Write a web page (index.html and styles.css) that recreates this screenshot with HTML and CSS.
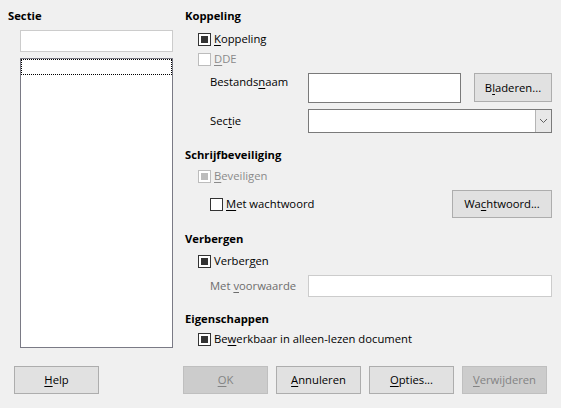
FILE: index.html
```html
<!DOCTYPE html>
<html>
<head>
<meta charset="utf-8">
<link rel="stylesheet" href="styles.css">
</head>
<body>
<div class="dialog">
  <div class="main">
    <div class="left">
      <div class="heading">Sectie</div>
      <div class="field field-light name-input"></div>
      <div class="listbox"><div class="focus-row"></div></div>
    </div>
    <div class="right">
      <div class="heading">Koppeling</div>
      <div class="chk-row r-link"><span class="cb checked"></span><span><u>K</u>oppeling</span></div>
      <div class="chk-row disabled"><span class="cb"></span><span><u>D</u>DE</span></div>
      <div class="row r-file">
        <span class="lbl lbl-top">Bestands<u>n</u>aam</span>
        <div class="field file-input"></div>
        <button class="btn browse">B<u>l</u>aderen...</button>
      </div>
      <div class="row r-sect">
        <span class="lbl">Sec<u>t</u>ie</span>
        <div class="combo"><span class="drop"><svg width="9" height="6" viewBox="0 0 9 6"><path d="M1 1 L4.5 4.5 L8 1" fill="none" stroke="#606060" stroke-width="1"/></svg></span></div>
      </div>
      <div class="heading h-prot">Schrijfbeveiliging</div>
      <div class="chk-row disabled r-prot"><span class="cb checked"></span><span><u>B</u>eveiligen</span></div>
      <div class="row r-pass">
        <span class="cb"></span><span class="pass-lbl"><u>M</u>et wachtwoord</span>
        <button class="btn pass-btn">Wa<u>c</u>htwoord...</button>
      </div>
      <div class="heading h-hide">Verbergen</div>
      <div class="chk-row r-hide"><span class="cb checked"></span><span>Verber<u>g</u>en</span></div>
      <div class="row r-cond">
        <span class="lbl disabled-text">Met <u>v</u>oorwaarde</span>
        <div class="field field-light cond-input"></div>
      </div>
      <div class="heading h-prop">Eigenschappen</div>
      <div class="chk-row r-edit"><span class="cb checked"></span><span>Be<u>w</u>erkbaar in alleen-lezen document</span></div>
    </div>
  </div>
  <div class="footer">
    <button class="btn"><u>H</u>elp</button>
    <div class="actions">
      <button class="btn disabled"><u>O</u>K</button>
      <button class="btn"><u>A</u>nnuleren</button>
      <button class="btn"><u>O</u>pties...</button>
      <button class="btn disabled"><u>V</u>erwijderen</button>
    </div>
  </div>
</div>
</body>
</html>
```
FILE: styles.css
```css
* { box-sizing: border-box; }
html, body { margin: 0; padding: 0; }
body {
  background: #f0f0f0;
  font-family: "Open Sans", "Noto Sans", sans-serif;
  font-size: 11.25px;
  line-height: 16px;
  color: #000;
}
u { text-underline-offset: 2px; }
.btn {
  width: 85px; height: 28px; padding: 0; margin: 0;
  background: #e1e1e1; border: 1px solid #adadad;
  font: inherit; color: #000;
  display: flex; align-items: center; justify-content: center; white-space: nowrap;
}
.btn.disabled { background: #cccccc; border-color: #bfbfbf; color: #838383; }

.dialog { width: 561px; height: 408px; display: flex; flex-direction: column; }
.main { height: 366px; padding-top: 8px; display: grid; grid-template-columns: 185px 1fr; }
.left { padding-left: 8px; display: flex; flex-direction: column; }
.heading { font-weight: 700; height: 16px; white-space: nowrap; }
.field { background: #fff; border: 1px solid #7a7a7a; }
.field-light { border-color: #cccccc; }
.name-input { margin-top: 6px; margin-left: 12px; width: 153px; height: 22px; }
.listbox { margin-top: 6px; margin-left: 12px; width: 153px; height: 290px; background: #fff; border: 1px solid #7a7a85; }
.focus-row { height: 16px; border: 1px dotted #000; }

.right { display: flex; flex-direction: column; padding-right: 9px; }
.row { display: flex; align-items: center; padding-left: 25px; }
.chk-row { display: flex; align-items: center; height: 20px; padding-left: 13px; gap: 3px; white-space: nowrap; }
.cb { width: 13px; height: 13px; border: 1px solid #333; background: #fff; display: flex; align-items: center; justify-content: center; flex: none; }
.cb.checked::after { content: ""; width: 7px; height: 7px; background: #333; }
.disabled { color: #8a8a8a; }
.disabled .cb { border-color: #bcbcbc; }
.disabled .cb.checked::after { background: #bcbcbc; }
.disabled-text { color: #6d6d6d; }

.r-link { margin-top: 5px; }
.lbl { width: 98px; flex: none; white-space: nowrap; }
.r-file { margin-top: 4px; height: 30px; align-items: flex-start; }
.lbl-top { padding-top: 1px; }
.file-input { width: 153px; height: 30px; flex: none; }
.btn.browse { margin-left: 13px; width: 78px; height: 29px; }
.r-sect { margin-top: 6px; height: 24px; }
.combo { width: 244px; height: 24px; background: #fff; border: 1px solid #7a7a7a; display: flex; justify-content: flex-end; }
.drop { width: 16px; height: 100%; background: #e8e8e8; border-left: 1px solid #b5b5b5; display: flex; align-items: center; justify-content: center; }
.h-prot { margin-top: 14px; }
.r-prot { margin-top: 3px; }
.r-pass { margin-top: 4px; height: 28px; gap: 3px; }
.pass-lbl { white-space: nowrap; }
.btn.pass-btn { margin-left: auto; width: 100px; height: 28px; }
.h-hide { margin-top: 13px; }
.r-hide { margin-top: 4px; }
.r-cond { margin-top: 4px; height: 22px; }
.cond-input { flex: 1; height: 22px; }
.h-prop { margin-top: 14px; }
.r-edit { margin-top: 2px; }

.footer { display: flex; padding: 0 14px; }
.actions { margin-left: auto; display: flex; gap: 8px; }
```
